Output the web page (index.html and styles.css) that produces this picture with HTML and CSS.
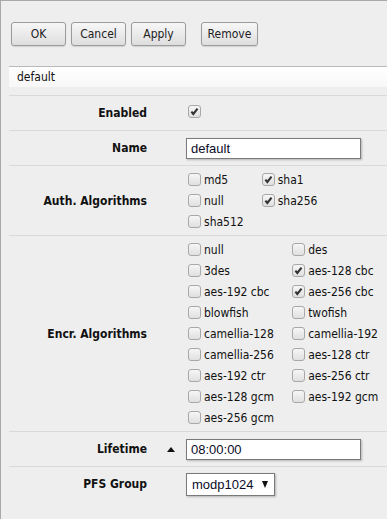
FILE: index.html
```html
<!DOCTYPE html>
<html lang="en">
<head>
  <meta charset="UTF-8">
  <meta name="viewport" content="width=device-width, initial-scale=1.0">
  <title>IPsec Proposal</title>
  <link rel="stylesheet" href="styles.css">
</head>
<body>
  <div class="toolbar">
    <button class="btn">OK</button>
    <button class="btn">Cancel</button>
    <button class="btn">Apply</button>
    <button class="btn btn-remove">Remove</button>
  </div>

  <div class="title-bar">default</div>

  <div class="form">
    <div class="row">
      <div class="label">Enabled</div>
      <div class="toggle"></div>
      <div class="value">
        <span class="cb checked"><svg viewBox="0 0 12 12"><path d="M2.6 6.2 L4.7 8.7 L9.3 2.9"/></svg></span>
      </div>
    </div>

    <div class="row">
      <div class="label">Name</div>
      <div class="toggle"></div>
      <div class="value"><div class="text-input">default</div></div>
    </div>

    <div class="row row-list">
      <div class="label">Auth. Algorithms</div>
      <div class="toggle"></div>
      <div class="value checks">
        <label class="check"><span class="cb"></span>md5</label>
        <label class="check"><span class="cb checked"><svg viewBox="0 0 12 12"><path d="M2.6 6.2 L4.7 8.7 L9.3 2.9"/></svg></span>sha1</label>
        <label class="check"><span class="cb"></span>null</label>
        <label class="check"><span class="cb checked"><svg viewBox="0 0 12 12"><path d="M2.6 6.2 L4.7 8.7 L9.3 2.9"/></svg></span>sha256</label>
        <label class="check"><span class="cb"></span>sha512</label>
      </div>
    </div>

    <div class="row row-list">
      <div class="label">Encr. Algorithms</div>
      <div class="toggle"></div>
      <div class="value checks">
        <label class="check"><span class="cb"></span>null</label>
        <label class="check"><span class="cb"></span>des</label>
        <label class="check"><span class="cb"></span>3des</label>
        <label class="check"><span class="cb checked"><svg viewBox="0 0 12 12"><path d="M2.6 6.2 L4.7 8.7 L9.3 2.9"/></svg></span>aes-128 cbc</label>
        <label class="check"><span class="cb"></span>aes-192 cbc</label>
        <label class="check"><span class="cb checked"><svg viewBox="0 0 12 12"><path d="M2.6 6.2 L4.7 8.7 L9.3 2.9"/></svg></span>aes-256 cbc</label>
        <label class="check"><span class="cb"></span>blowfish</label>
        <label class="check"><span class="cb"></span>twofish</label>
        <label class="check"><span class="cb"></span>camellia-128</label>
        <label class="check"><span class="cb"></span>camellia-192</label>
        <label class="check"><span class="cb"></span>camellia-256</label>
        <label class="check"><span class="cb"></span>aes-128 ctr</label>
        <label class="check"><span class="cb"></span>aes-192 ctr</label>
        <label class="check"><span class="cb"></span>aes-256 ctr</label>
        <label class="check"><span class="cb"></span>aes-128 gcm</label>
        <label class="check"><span class="cb"></span>aes-192 gcm</label>
        <label class="check"><span class="cb"></span>aes-256 gcm</label>
      </div>
    </div>

    <div class="row">
      <div class="label">Lifetime</div>
      <div class="toggle"><span class="arrow-up"></span></div>
      <div class="value"><div class="text-input">08:00:00</div></div>
    </div>

    <div class="row">
      <div class="label">PFS Group</div>
      <div class="toggle"></div>
      <div class="value"><div class="select">modp1024<span class="caret"></span></div></div>
    </div>
  </div>
</body>
</html>
```

FILE: styles.css
```css
/* General Styles */
html, body {
  height: 100%;
}

body {
  margin: 0;
  background-color: #eeeeee;
  border-top: 1px solid #a9a9a9;
  border-left: 1px solid #a9a9a9;
  box-sizing: border-box;
  font-family: "DejaVu Sans Condensed", "DejaVu Sans", sans-serif;
  font-size: 12px;
  color: #111;
  overflow: hidden;
}

/* Toolbar */
.toolbar {
  display: flex;
  gap: 5px;
  padding: 21px 0 0 10px;
}

.btn {
  width: 55px;
  height: 24px;
  padding: 0;
  border: 1px solid #9b9b9b;
  border-radius: 3px;
  background: linear-gradient(#f7f7f7, #dedede);
  box-shadow: 0 1px 1px rgba(0, 0, 0, 0.12);
  font-family: inherit;
  font-size: 12px;
  color: #222;
}

.btn-remove {
  width: 57px;
  margin-left: 10px;
}

/* Title bar */
.title-bar {
  margin: 20px 0 0 8px;
  height: 20px;
  line-height: 20px;
  padding-left: 8px;
  border-top: 1px solid #b9b9b9;
  background: linear-gradient(#ffffff, #f7f7f7);
}

/* Form rows */
.form {
  margin: 8px 0 0 8px;
}

.row {
  display: grid;
  grid-template-columns: 138px 39px 1fr;
  align-items: center;
  min-height: 34px;
  border-top: 1px solid #d9d9d9;
}

.row-list {
  padding: 3px 0;
}

.label {
  text-align: right;
  font-weight: bold;
  color: #111;
}

.toggle {
  display: flex;
  justify-content: flex-end;
  padding-right: 11px;
}

.arrow-up {
  width: 0;
  height: 0;
  border-left: 4px solid transparent;
  border-right: 4px solid transparent;
  border-bottom: 5px solid #111;
}

/* Inputs */
.text-input {
  width: 165px;
  height: 19px;
  line-height: 19px;
  padding: 0 4px;
  border: 1px solid #7a7a7a;
  background: #fff;
  box-shadow: 1px 1px 2px rgba(0, 0, 0, 0.25);
  font-family: "Liberation Sans", Arial, sans-serif;
  font-size: 13px;
  color: #0c0c2a;
}

.select {
  display: inline-flex;
  align-items: center;
  gap: 9px;
  height: 21px;
  padding: 0 6px 0 5px;
  border: 1px solid #7a7a7a;
  background: #fff;
  box-shadow: 1px 1px 2px rgba(0, 0, 0, 0.25);
  font-family: "Liberation Sans", Arial, sans-serif;
  font-size: 13px;
  color: #0c0c2a;
}

.caret {
  width: 0;
  height: 0;
  border-left: 3.5px solid transparent;
  border-right: 3.5px solid transparent;
  border-top: 7px solid #111;
}

/* Checkboxes */
.checks {
  display: grid;
  grid-template-columns: auto auto;
  justify-content: start;
  column-gap: 16px;
}

.check {
  display: flex;
  align-items: center;
  gap: 3px;
  height: 21px;
  padding-left: 2px;
  white-space: nowrap;
}

.value > .cb {
  margin-left: 2px;
}

.cb {
  display: inline-block;
  width: 11px;
  height: 11px;
  border: 1px solid #a8a8a8;
  border-radius: 3px;
  background: linear-gradient(#f6f6f6, #e0e0e0);
}

.cb svg {
  display: block;
  width: 11px;
  height: 11px;
}

.cb path {
  fill: none;
  stroke: #333;
  stroke-width: 2.3;
}
```
